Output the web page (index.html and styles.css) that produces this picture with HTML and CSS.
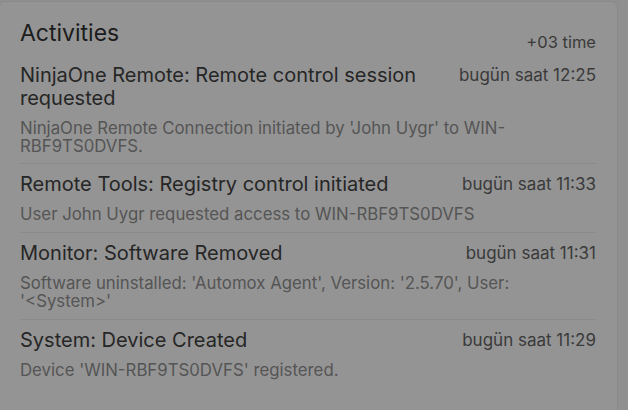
FILE: index.html
```html
<!DOCTYPE html>
<html>
<head>
<meta charset="utf-8">
<link rel="stylesheet" href="styles.css">
</head>
<body>
<div class="card">
  <div class="header">
    <h2 class="heading">Activities</h2>
    <span class="tz">+03 time</span>
  </div>
  <ul class="list">
    <li class="item">
      <div class="item-top">
        <div class="item-title">NinjaOne Remote: Remote control session requested</div>
        <div class="item-time">bugün saat 12:25</div>
      </div>
      <div class="item-desc">NinjaOne Remote Connection initiated by 'John Uygr' to WIN-RBF9TS0DVFS.</div>
    </li>
    <li class="item">
      <div class="item-top">
        <div class="item-title">Remote Tools: Registry control initiated</div>
        <div class="item-time">bugün saat 11:33</div>
      </div>
      <div class="item-desc">User John Uygr requested access to WIN-RBF9TS0DVFS</div>
    </li>
    <li class="item">
      <div class="item-top">
        <div class="item-title">Monitor: Software Removed</div>
        <div class="item-time">bugün saat 11:31</div>
      </div>
      <div class="item-desc">Software uninstalled: 'Automox Agent', Version: '2.5.70', User: '&lt;System&gt;'</div>
    </li>
    <li class="item">
      <div class="item-top">
        <div class="item-title">System: Device Created</div>
        <div class="item-time">bugün saat 11:29</div>
      </div>
      <div class="item-desc">Device 'WIN-RBF9TS0DVFS' registered.</div>
    </li>
  </ul>
</div>
</body>
</html>
```
FILE: styles.css
```css
html, body {
  margin: 0;
  padding: 0;
  background: #8f8f8f;
  height: 100%;
  overflow: hidden;
}
body {
  font-family: Inter, "Liberation Sans", sans-serif;
  padding-top: 1px;
  padding-right: 10px;
  box-sizing: border-box;
}
.card {
  margin-left: -1px;
  background: #949494;
  border: 1px solid #8a8a8a;
  border-bottom: none;
  border-radius: 6px 6px 0 0;
  padding: 18px 21px 0 20px;
  height: 409px;
  box-sizing: border-box;
}
.header {
  display: flex;
  justify-content: space-between;
  align-items: flex-end;
}
.heading {
  margin: 0;
  font-size: 23px;
  font-weight: 400;
  line-height: 26px;
  color: #1c1c1c;
}
.tz {
  font-size: 16.5px;
  line-height: 20px;
  color: #3a3a3a;
  margin-bottom: -6px;
}
.list {
  list-style: none;
  margin: 18px 0 0 0;
  padding: 0;
}
.item {
  padding: 0 0 9px 0;
  border-bottom: 1px solid #8a8a8a;
  margin-bottom: 9px;
}
.item:first-child {
  padding-bottom: 8px;
}
.item:last-child {
  border-bottom: none;
  padding-bottom: 0;
}
.item-top {
  display: flex;
  justify-content: space-between;
  gap: 30px;
}
.item-title {
  font-size: 20px;
  line-height: 23px;
  color: #262626;
}
.item-time {
  font-size: 17px;
  line-height: 23px;
  color: #3a3a3a;
  white-space: nowrap;
  flex-shrink: 0;
}
.item-desc {
  margin-top: 9px;
  font-size: 16.8px;
  line-height: 18px;
  color: #555555;
}
```
